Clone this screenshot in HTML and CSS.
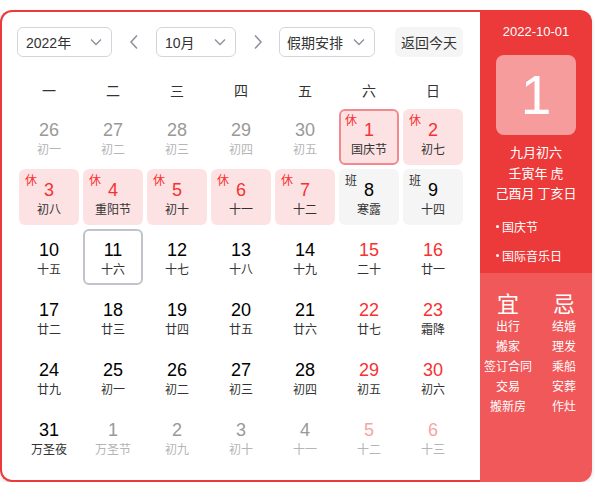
FILE: index.html
```html
<!DOCTYPE html>
<html lang="zh-CN">
<head>
<meta charset="utf-8">
<title>万年历</title>
<link rel="stylesheet" href="styles.css">
</head>
<body>
<div class="cal">
  <div class="main">
    <div class="toolbar">
      <div class="select sel-year"><span>2022年</span><svg class="chev" width="12" height="8" viewBox="0 0 12 8"><path d="M1 1.5 L6 6.5 L11 1.5" fill="none" stroke="#8c8f99" stroke-width="1.3"/></svg></div>
      <div class="arrow"><svg width="10" height="16" viewBox="0 0 10 16"><path d="M8 1.5 L2 8 L8 14.5" fill="none" stroke="#8c8f99" stroke-width="1.5"/></svg></div>
      <div class="select sel-month"><span>10月</span><svg class="chev" width="12" height="8" viewBox="0 0 12 8"><path d="M1 1.5 L6 6.5 L11 1.5" fill="none" stroke="#8c8f99" stroke-width="1.3"/></svg></div>
      <div class="arrow arrow-r"><svg width="10" height="16" viewBox="0 0 10 16"><path d="M2 1.5 L8 8 L2 14.5" fill="none" stroke="#8c8f99" stroke-width="1.5"/></svg></div>
      <div class="select sel-hol"><span>假期安排</span><svg class="chev" width="12" height="8" viewBox="0 0 12 8"><path d="M1 1.5 L6 6.5 L11 1.5" fill="none" stroke="#8c8f99" stroke-width="1.3"/></svg></div>
      <div class="today-btn">返回今天</div>
    </div>
    <div class="weekdays">
      <span>一</span><span>二</span><span>三</span><span>四</span><span>五</span><span>六</span><span>日</span>
    </div>
    <div class="grid">
      <div class="cell other"><b>26</b><i>初一</i></div>
      <div class="cell other"><b>27</b><i>初二</i></div>
      <div class="cell other"><b>28</b><i>初三</i></div>
      <div class="cell other"><b>29</b><i>初四</i></div>
      <div class="cell other"><b>30</b><i>初五</i></div>
      <div class="cell rest selected"><em class="tag">休</em><b>1</b><i>国庆节</i></div>
      <div class="cell rest"><em class="tag">休</em><b>2</b><i>初七</i></div>

      <div class="cell rest"><em class="tag">休</em><b>3</b><i>初八</i></div>
      <div class="cell rest"><em class="tag">休</em><b>4</b><i>重阳节</i></div>
      <div class="cell rest"><em class="tag">休</em><b>5</b><i>初十</i></div>
      <div class="cell rest"><em class="tag">休</em><b>6</b><i>十一</i></div>
      <div class="cell rest"><em class="tag">休</em><b>7</b><i>十二</i></div>
      <div class="cell work"><em class="tag">班</em><b>8</b><i>寒露</i></div>
      <div class="cell work"><em class="tag">班</em><b>9</b><i>十四</i></div>

      <div class="cell"><b>10</b><i>十五</i></div>
      <div class="cell today"><b>11</b><i>十六</i></div>
      <div class="cell"><b>12</b><i>十七</i></div>
      <div class="cell"><b>13</b><i>十八</i></div>
      <div class="cell"><b>14</b><i>十九</i></div>
      <div class="cell wkend"><b>15</b><i>二十</i></div>
      <div class="cell wkend"><b>16</b><i>廿一</i></div>

      <div class="cell"><b>17</b><i>廿二</i></div>
      <div class="cell"><b>18</b><i>廿三</i></div>
      <div class="cell"><b>19</b><i>廿四</i></div>
      <div class="cell"><b>20</b><i>廿五</i></div>
      <div class="cell"><b>21</b><i>廿六</i></div>
      <div class="cell wkend"><b>22</b><i>廿七</i></div>
      <div class="cell wkend"><b>23</b><i>霜降</i></div>

      <div class="cell"><b>24</b><i>廿九</i></div>
      <div class="cell"><b>25</b><i>初一</i></div>
      <div class="cell"><b>26</b><i>初二</i></div>
      <div class="cell"><b>27</b><i>初三</i></div>
      <div class="cell"><b>28</b><i>初四</i></div>
      <div class="cell wkend"><b>29</b><i>初五</i></div>
      <div class="cell wkend"><b>30</b><i>初六</i></div>

      <div class="cell"><b>31</b><i>万圣夜</i></div>
      <div class="cell other"><b>1</b><i>万圣节</i></div>
      <div class="cell other"><b>2</b><i>初九</i></div>
      <div class="cell other"><b>3</b><i>初十</i></div>
      <div class="cell other"><b>4</b><i>十一</i></div>
      <div class="cell other wkend"><b>5</b><i>十二</i></div>
      <div class="cell other wkend"><b>6</b><i>十三</i></div>
    </div>
  </div>
  <div class="side">
    <div class="side-top">
      <div class="side-date">2022-10-01</div>
      <div class="big-day">1</div>
      <div class="lunar-info">
        <div>九月初六</div>
        <div>壬寅年 虎</div>
        <div>己酉月 丁亥日</div>
      </div>
      <ul class="fest">
        <li>国庆节</li>
        <li>国际音乐日</li>
      </ul>
    </div>
    <div class="side-bottom">
      <div class="yj">
        <div class="yj-head">宜</div>
        <div>出行</div><div>搬家</div><div>签订合同</div><div>交易</div><div>搬新房</div>
      </div>
      <div class="yj">
        <div class="yj-head">忌</div>
        <div>结婚</div><div>理发</div><div>乘船</div><div>安葬</div><div>作灶</div>
      </div>
    </div>
  </div>
</div>
</body>
</html>
```

FILE: styles.css
```css
* { box-sizing: border-box; }
html, body { margin: 0; padding: 0; background: #fff; }
body {
  font-family: "Liberation Sans", Arial, "Noto Sans CJK SC", sans-serif;
  color: #333;
  padding-top: 10px;
}
.cal {
  display: flex;
  width: 592px;
  height: 472px;
  border-radius: 12px;
  box-shadow: 0 2px 5px rgba(0,0,0,0.12);
}
.main {
  width: 480px;
  border: 2px solid #ec3939;
  border-right: none;
  border-radius: 12px 0 0 12px;
  padding: 15px 15px 15px 15px;
}
.toolbar {
  display: flex;
  align-items: center;
  height: 30px;
}
.select {
  height: 30px;
  border: 1px solid #d3d5dc;
  border-radius: 6px;
  display: flex;
  align-items: center;
  justify-content: space-between;
  padding: 0 9px 0 8px;
  font-size: 14px;
  color: #333;
  font-family: "Liberation Sans", "Noto Sans CJK SC", sans-serif;
}
.sel-year { width: 95px; }
.sel-month { width: 80px; }
.sel-hol { width: 96px; padding-left: 7px; }
.arrow {
  width: 44px;
  height: 30px;
  display: flex;
  align-items: center;
  justify-content: center;
}
.arrow-r { width: 43px; padding-left: 1px; }
.today-btn {
  margin-left: 20px;
  width: 68px;
  height: 30px;
  border-radius: 6px;
  background: #f5f5f6;
  font-size: 14px;
  line-height: 30px;
  text-align: center;
  color: #333;
  font-family: "Noto Sans CJK SC", sans-serif;
}
.weekdays {
  display: grid;
  grid-template-columns: repeat(7, 60px);
  column-gap: 4px;
  margin: 21px 0 7px 2px;
  height: 24px;
  line-height: 24px;
  font-size: 14px;
  text-align: center;
  font-family: "Noto Sans CJK SC", sans-serif;
  color: #333;
}
.grid {
  display: grid;
  grid-template-columns: repeat(7, 60px);
  grid-auto-rows: 56px;
  gap: 4px;
  margin-left: 2px;
}
.cell {
  position: relative;
  border-radius: 6px;
  text-align: center;
  padding-top: 10px;
}
.cell b {
  display: block;
  font-weight: normal;
  font-size: 18px;
  line-height: 22px;
  color: #000;
  font-family: "Liberation Sans", Arial, sans-serif;
}
.cell i {
  display: block;
  font-style: normal;
  font-size: 12px;
  line-height: 16px;
  color: #333;
  font-family: "Noto Sans CJK SC", sans-serif;
}
.cell .tag {
  position: absolute;
  left: 6px;
  top: 3px;
  font-style: normal;
  font-size: 12px;
  line-height: 16px;
  font-family: "Noto Sans CJK SC", sans-serif;
}
.rest { background: #fde2e4; }
.rest b { color: #f73131; }
.rest .tag { color: #f73131; }
.work { background: #f5f5f6; }
.work .tag { color: #333; }
.selected { border: 2px solid #f08a8c; padding-top: 8px; }
.selected .tag { left: 4px; top: 1px; }
.today { border: 2px solid #c0c3cc; padding-top: 8px; }
.wkend b { color: #f73131; }
.other b { color: #999; }
.other i { color: #b5b5b5; }
.other.wkend b { color: #f7a4a6; }
.side {
  width: 112px;
  display: flex;
  flex-direction: column;
  border-radius: 0 12px 12px 0;
  overflow: hidden;
  color: #fff;
  font-family: "Noto Sans CJK SC", sans-serif;
}
.side-top {
  background: #ec3939;
  height: 263px;
  padding-top: 12px;
}
.side-date {
  text-align: center;
  font-size: 13px;
  line-height: 20px;
  font-family: "Liberation Sans", Arial, sans-serif;
}
.big-day {
  width: 80px;
  height: 80px;
  margin: 13px auto 0;
  border-radius: 8px;
  background: rgba(255,255,255,0.5);
  text-align: center;
  font-size: 55px;
  line-height: 80px;
  font-family: "Liberation Sans", Arial, sans-serif;
}
.lunar-info {
  margin-top: 7px;
  text-align: center;
  font-size: 13px;
  line-height: 20.5px;
}
.fest {
  list-style: none;
  margin: 8px 0 0 0;
  padding: 0 0 0 22px;
  font-size: 12px;
  line-height: 29px;
}
.fest li { position: relative; }
.fest li::before {
  content: "";
  position: absolute;
  left: -6px;
  top: 13px;
  width: 3px;
  height: 3px;
  border-radius: 50%;
  background: #fff;
}
.side-bottom {
  flex: 1;
  background: #f05859;
  display: flex;
  padding-top: 15px;
}
.yj {
  width: 56px;
  text-align: center;
  font-size: 12px;
  line-height: 20px;
}
.yj-head {
  font-size: 22px;
  line-height: 28px;
}
```
